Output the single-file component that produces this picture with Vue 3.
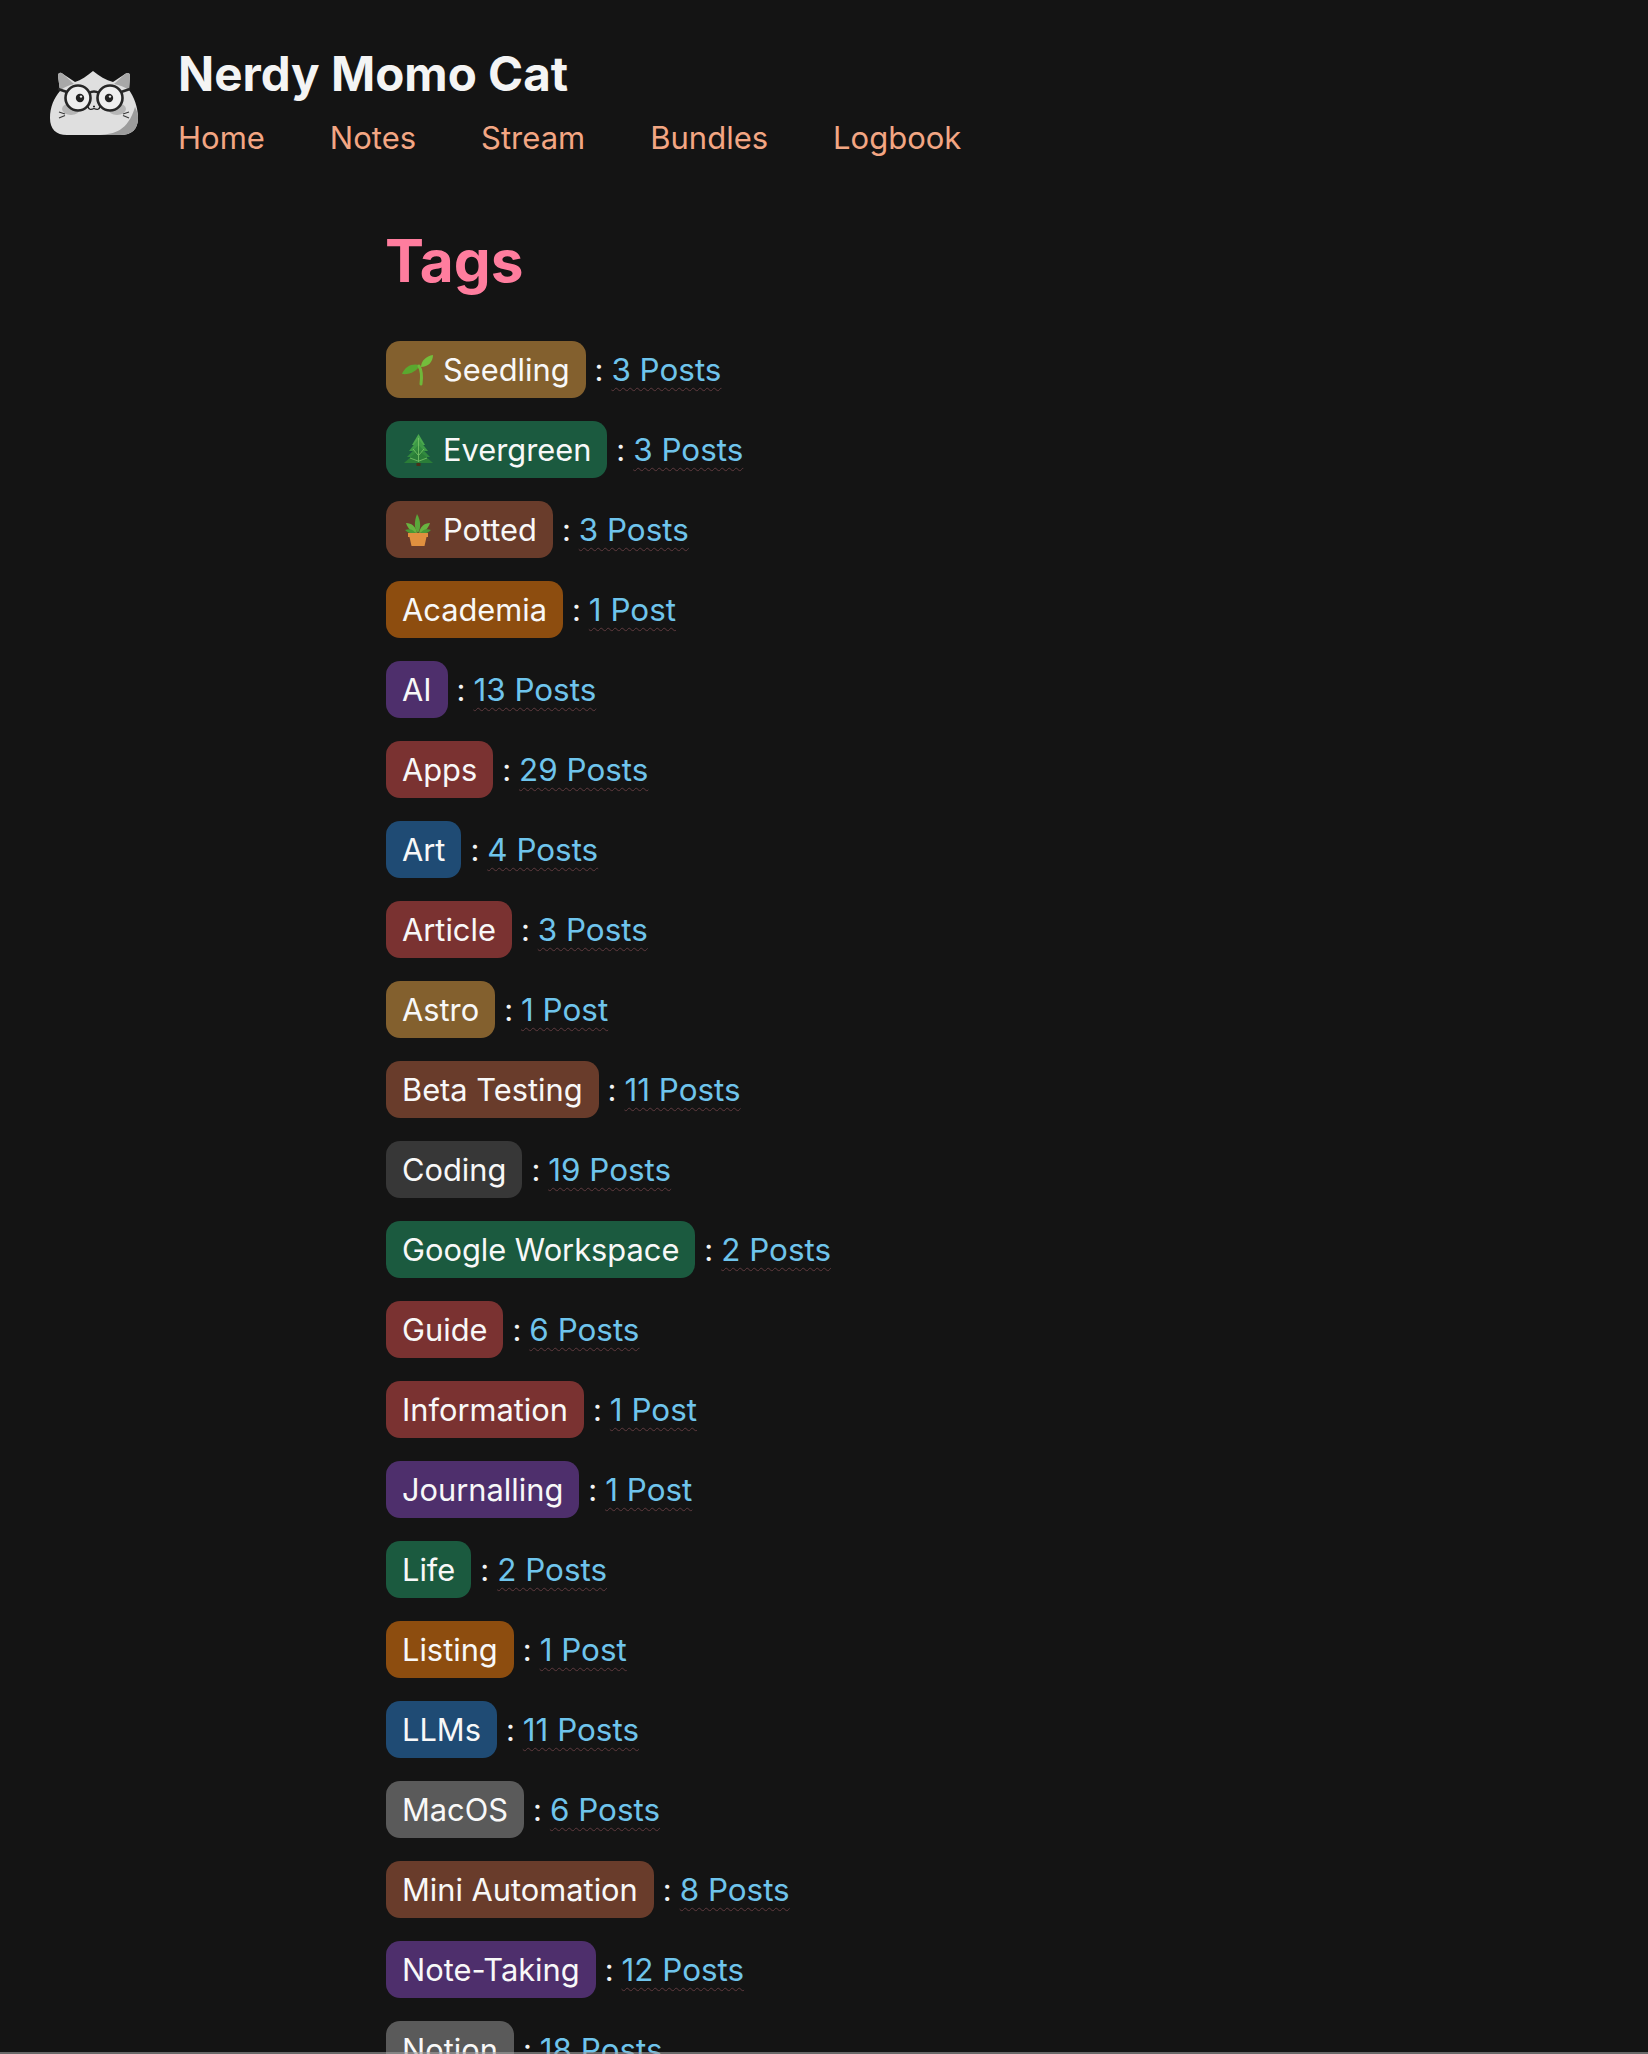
<script setup>
const tags = [
  { name: 'Seedling', icon: 'seedling', color: '#83602e', count: '3 Posts' },
  { name: 'Evergreen', icon: 'tree', color: '#1b5a3f', count: '3 Posts' },
  { name: 'Potted', icon: 'potted', color: '#693c2b', count: '3 Posts' },
  { name: 'Academia', color: '#8d4d0f', count: '1 Post' },
  { name: 'AI', color: '#4e2f6c', count: '13 Posts' },
  { name: 'Apps', color: '#7a3231', count: '29 Posts' },
  { name: 'Art', color: '#1f4b74', count: '4 Posts' },
  { name: 'Article', color: '#7a3231', count: '3 Posts' },
  { name: 'Astro', color: '#83602e', count: '1 Post' },
  { name: 'Beta Testing', color: '#693c2b', count: '11 Posts' },
  { name: 'Coding', color: '#373737', count: '19 Posts' },
  { name: 'Google Workspace', color: '#1b5a3f', count: '2 Posts' },
  { name: 'Guide', color: '#7a3231', count: '6 Posts' },
  { name: 'Information', color: '#7a3231', count: '1 Post' },
  { name: 'Journalling', color: '#4e2f6c', count: '1 Post' },
  { name: 'Life', color: '#1b5a3f', count: '2 Posts' },
  { name: 'Listing', color: '#8d4d0f', count: '1 Post' },
  { name: 'LLMs', color: '#1f4b74', count: '11 Posts' },
  { name: 'MacOS', color: '#5a5a5a', count: '6 Posts' },
  { name: 'Mini Automation', color: '#693c2b', count: '8 Posts' },
  { name: 'Note-Taking', color: '#4e2f6c', count: '12 Posts' },
  { name: 'Notion', color: '#5a5a5a', count: '18 Posts' }
]
const navLinks = ['Home', 'Notes', 'Stream', 'Bundles', 'Logbook']
</script>

<template>
  <div class="page">
    <header class="site-header">
      <svg class="logo" viewBox="0 0 88 64" width="88" height="64">
        <path d="M0 47C0 36 4 27 10 20L8 5C8 1 11 1 13 3L25 11C31 9 37 5 43 0C49 5 56 9 63 11L75 3C78 1 80 2 80 5L79 19C84 26 88 36 88 47C88 58 82 64 70 64H17C6 64 0 58 0 47Z" fill="#dfdfdf"/>
        <path d="M10 20L8 5C8 1 11 1 13 3L24 13C19 14 14 16 10 20Z" fill="#a8a8a8"/>
        <path d="M79 19L80 5C80 2 78 1 75 3L64 13C69 14 75 16 79 19Z" fill="#a8a8a8"/>
        <path d="M88 47C88 58 82 64 70 64H50C64 63 78 60 85 36C87 40 88 43 88 47Z" fill="#9c9c9c"/>
        <ellipse cx="21" cy="38" rx="9" ry="6" fill="#b6b6b6"/>
        <ellipse cx="67" cy="38" rx="9" ry="6" fill="#b6b6b6"/>
        <circle cx="28" cy="27" r="12.5" fill="#eeeeee" stroke="#262626" stroke-width="2.6"/>
        <circle cx="60" cy="27" r="12.5" fill="#eeeeee" stroke="#262626" stroke-width="2.6"/>
        <path d="M39 22Q44 19 49 22M17 21L8 18M71 21L80 18" fill="none" stroke="#262626" stroke-width="2.6"/>
        <circle cx="30" cy="27" r="4.2" fill="#222"/>
        <circle cx="59" cy="27" r="4.2" fill="#222"/>
        <circle cx="31" cy="25.6" r="1.2" fill="#eee"/>
        <circle cx="60" cy="25.6" r="1.2" fill="#eee"/>
        <path d="M38 35.5Q39 40 44 37.5Q49 40 50 35.5M43 35.5H45" fill="none" stroke="#222" stroke-width="1.3"/>
        <path d="M9 41L15 43M9 47L15 44.5M79 41L73 43M79 47L73 44.5" fill="none" stroke="#3a3a3a" stroke-width="1.3"/>
      </svg>
      <div class="brand">
        <h2 class="site-title">Nerdy Momo Cat</h2>
        <nav class="nav">
          <a v-for="link in navLinks" :key="link" class="nav-link">{{ link }}</a>
        </nav>
      </div>
    </header>

    <main class="content">
      <h1 class="heading">Tags</h1>
      <ul class="tag-list">
        <li v-for="tag in tags" :key="tag.name" class="tag-row">
          <span class="tag" :style="{ background: tag.color }">
            <svg v-if="tag.icon === 'seedling'" class="emoji" viewBox="0 0 32 32">
              <path d="M0 20C3 12 10 9 18 11C15 17 8 21 0 20Z" fill="#5aa82f"/>
              <path d="M31 1C31 8 26 13 19 13C19 7 24 2 31 1Z" fill="#74bd3c"/>
              <path d="M17 12C20 17 20 23 19 30" fill="none" stroke="#6fb83a" stroke-width="3" stroke-linecap="round"/>
            </svg>
            <svg v-else-if="tag.icon === 'tree'" class="emoji" viewBox="0 0 32 32">
              <rect x="14.5" y="27" width="4" height="5" fill="#4a2f18"/>
              <path d="M16.5 0L23 11H10Z" fill="#4aa84e"/>
              <path d="M16.5 5L26 17H7Z" fill="#3d9a46"/>
              <path d="M16.5 11L28 23H5Z" fill="#318a3e"/>
              <path d="M16.5 16L31 29H2Z" fill="#2a7d38"/>
              <path d="M16.5 4V28M11 15L16 21M22 15L17 21M8 24L16 27M25 24L17 27" fill="none" stroke="#7cc76a" stroke-width="0.8"/>
            </svg>
            <svg v-else-if="tag.icon === 'potted'" class="emoji" viewBox="0 0 32 32">
              <path d="M16 19C12 15 12 8 15 0C19 7 19 14 16 19Z" fill="#5aa83a"/>
              <path d="M15 19C10 19 6 15 4 9C10 9 14 13 15 19Z" fill="#68b440"/>
              <path d="M17 19C22 19 26 15 28 9C22 9 18 13 17 19Z" fill="#68b440"/>
              <path d="M14 20C10 20 6 19 3 16C8 14 12 16 14 20Z" fill="#4a9a35"/>
              <path d="M18 20C22 20 26 19 29 16C24 14 20 16 18 20Z" fill="#4a9a35"/>
              <path d="M6 19H26V23H24.5L22.5 32H9.5L7.5 23H6Z" fill="#e0903f"/>
            </svg>
            {{ tag.name }}
          </span>
          <span class="colon">:</span>
          <a class="count">{{ tag.count }}</a>
        </li>
      </ul>
    </main>
    <div class="bottom-line"></div>
  </div>
</template>

<style>
html, body {
  margin: 0;
  background: #141414;
}
</style>

<style scoped>
.page {
  position: relative;
  height: 2054px;
  overflow: hidden;
  background: #141414;
  color: #f4f4f4;
  font-family: Inter, "Noto Sans", sans-serif;
}
.site-header {
  display: flex;
  align-items: center;
  gap: 40px;
  padding: 47px 0 0 50px;
}
.logo {
  flex: none;
}
.site-title {
  margin: 0;
  font-size: 47.5px;
  line-height: 54px;
  font-weight: 700;
}
.nav {
  display: flex;
  gap: 65px;
  margin-top: 17px;
}
.nav-link {
  font-size: 31px;
  line-height: 40px;
  color: #f3a683;
}
.content {
  padding-left: 386px;
}
.heading {
  margin: 65px -1px 42px;
  font-size: 58.5px;
  line-height: 76px;
  font-weight: 700;
  color: #ff7d9e;
}
.tag-list {
  margin: 0;
  padding: 0;
  list-style: none;
  display: flex;
  flex-direction: column;
  gap: 23px;
}
.tag-row {
  display: flex;
  align-items: center;
  height: 57px;
  font-size: 30.8px;
}
.tag {
  display: inline-flex;
  align-items: center;
  padding: 0 16px;
  height: 57px;
  border-radius: 14px;
  color: #f8f8f8;
}
.emoji {
  width: 32px;
  height: 32px;
  margin-right: 9px;
}
.colon {
  margin: 0 8px 0 9px;
}
.count {
  font-size: 31.4px;
  color: #6fc4ec;
  text-decoration: underline wavy #5f3a3e 1.2px;
  text-underline-offset: 6px;
}
.bottom-line {
  position: absolute;
  left: 0;
  right: 0;
  bottom: 0;
  height: 2px;
  background: rgba(160, 160, 160, 0.6);
}
</style>
